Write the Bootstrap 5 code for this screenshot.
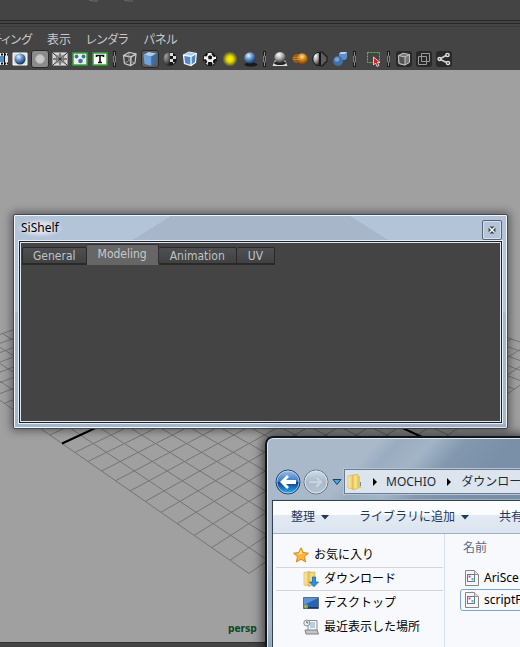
<!DOCTYPE html>
<html lang="ja">
<head>
<meta charset="utf-8">
<meta name="viewport" content="width=device-width, initial-scale=1">
<title>SiShelf</title>
<link href="https://cdn.jsdelivr.net/npm/bootstrap@5.3.0/dist/css/bootstrap.min.css" rel="stylesheet">
<style>
body { font: 12px/18px "Noto Sans", "Noto Sans CJK JP", sans-serif; background: #a0a0a0; color: #000; }
button { font: inherit; }
svg { display: block; flex: none; }
.head { background: #444; }
.head-strip { height: 20px; color: #666; }
.head-rule { height: 4px; border-top: 1px solid #282828; border-bottom: 1px solid #282828; }
.head-edge { height: 3px; border-bottom: 1px solid #3a3a3a; }
.menus { gap: 15px; margin-left: -9px; height: 23px; padding-top: 3px; font-feature-settings: "palt"; }
.menus a { color: #c8c8c8; text-decoration: none; white-space: nowrap; }
.tools { height: 20px; padding-bottom: 2px; margin-left: -10px; }
.tool { width: 20px; height: 18px; padding: 0 1px; border: 1px solid transparent; background: none; border-radius: 3px; flex: none; display: flex; align-items: center; justify-content: center; }
.tool.on { width: 18px; margin: 0 1px; padding: 0; border-color: #292929; background: #5c5c5c; }
.tool.lit { background: #8b8b8b; }
.tool.dark { width: 16px; height: 16px; margin: 0 2px; padding: 0; background: #292929; }
.tool-sep { width: 10px; flex: none; }
.scene { background: #a0a0a0; }
.foot { height: 5px; background: #444; border-top: 1px solid #303030; }
.scene-name { color: #0b4a24; font: bold 10px/12px "DejaVu Sans Condensed", "DejaVu Sans", sans-serif; padding: 0 0 7px 228px; }
.grid-art { left: 0; top: 0; }

.shelf { left: 13px; right: 12px; top: 214px; height: 215px; padding: 0 4px 4px; border: 1px solid #3f4a57; border-radius: 2px;
  box-shadow: inset 0 0 0 1px #f1f6fb, 0 0 8px 2px rgba(0,0,0,.42);
  background: linear-gradient(148deg, #b4c4d8 0 84px, transparent 84px) , linear-gradient(212deg, #b4c4d8 0 84px, #a7b7c9 84px); }
.shelf-title { height: 26px; padding: 0 1px 0 0; }
.shelf-title span { background: radial-gradient(ellipse, #d8e0eb 40%, transparent 72%); padding: 0 4px; margin-left: -1px; }
.shut { width: 20px; height: 20px; padding: 0; border: 1px solid #566477; border-radius: 2px; background: #b4c4d8; box-shadow: inset 0 0 0 1px #d5e0ee; margin-top: 3px; display: flex; align-items: center; justify-content: center; }
.shelf-body { background: #444; border: 1px solid #202124; outline: 1px solid #e5edf6; box-shadow: inset 0 0 0 1px #dfe6ee; padding: 2px; margin: 0 1px 1px; }
.tabs { align-items: flex-end; font-family: "DejaVu Sans Condensed", "Noto Sans", sans-serif; }
.tabs button { height: 18px; padding: 0 11px; border: 1px solid #292929; border-left-width: 0; border-bottom-width: 2px; background: linear-gradient(#4d5052, #414141); color: #bfc3c7; line-height: 16px; border-radius: 2px 2px 0 0; }
.tabs button:first-child { border-left-width: 1px; padding: 0 10px; }
.tabs button.active { height: 21px; background: #666; border-color: #303030; border-bottom-color: #666; line-height: 18px; color: #c8c8c8; }

.files { left: 265px; right: -8px; top: 436px; bottom: -8px; border: 2px solid #10161d; border-radius: 8px; padding: 0 5px; box-shadow: inset 0 0 0 1px #dce8f3, 0 0 11px 2px rgba(0,0,0,.65);
  background: linear-gradient(132deg, #a9b9ca 0 85px, #9aacc0 100px, #a3b4c6 125px, #8398af 150px, #7990a8 185px, #758da6 100%); }
.addr-row { height: 62px; padding: 31px 0 6px 3px; }
.round { width: 26px; height: 26px; padding: 0; border: 0; background: none; margin-right: 2px; flex: none; }
.drop { padding: 0; border: 0; background: none; margin: 0 2px 0 1px; }
.address { height: 25px; background: #dce4ee; border: 1px solid #6a7c91; box-shadow: 0 0 0 1px #b5c4d4; padding-left: 2px; white-space: nowrap; overflow: hidden; }
.address a { color: #1d2a38; text-decoration: none; line-height: 20px; }
.client { background: #f7f9fc; border: 1px solid #34404e; border-bottom: 0; box-shadow: 0 0 0 1px #9fb1c4; }
.commands { height: 33px; border-bottom: 1px solid #9eb0c5; padding-left: 18px; gap: 30px; background: linear-gradient(#fafcfe 0 14px, #e3eaf3 14px, #dbe4ef); white-space: nowrap; }
.commands button { background: none; border: 0; padding: 0; color: #1e395b; display: flex; align-items: center; gap: 6px; }
.places { width: 172px; border-right: 1px solid #d3dfec; padding: 9px 1px 0 3px; flex: none; }
.places a, .listing a { color: #000; text-decoration: none; display: flex; align-items: center; white-space: nowrap; }
.places a { height: 24px; padding-left: 27px; gap: 5px; }
.places a.top { padding-left: 17px; }
.places a.here { border: solid #d2d6dc; border-width: 1px 0; }
.listing { padding: 5px 0 0 15px; }
.listing .caption2 { color: #5b6b7f; padding: 0 0 10px 3px; }
.listing a { height: 22px; padding-left: 4px; gap: 5px; border: 1px solid transparent; border-radius: 3px; }
.listing a.picked { border-color: #7da2ce; }
</style>
<script src="https://cdn.jsdelivr.net/npm/bootstrap@5.3.0/dist/js/bootstrap.bundle.min.js" defer></script>
</head>
<body>
<svg width="0" height="0" class="position-absolute" aria-hidden="true">
  <defs>
    <radialGradient id="gBlue" cx=".38" cy=".3" r=".7"><stop offset="0" stop-color="#e8f4ff"/><stop offset=".45" stop-color="#6795c8"/><stop offset="1" stop-color="#123460"/></radialGradient>
    <radialGradient id="gGrey" cx=".4" cy=".25" r=".75"><stop offset="0" stop-color="#fff"/><stop offset=".5" stop-color="#aaa"/><stop offset="1" stop-color="#333"/></radialGradient>
    <radialGradient id="gGold" cx=".5" cy=".3" r=".7"><stop offset="0" stop-color="#ffe2a0"/><stop offset=".4" stop-color="#d58a26"/><stop offset="1" stop-color="#6d3603"/></radialGradient>
    <radialGradient id="gSun"><stop offset="0" stop-color="#fff600"/><stop offset=".4" stop-color="#e0d800"/><stop offset=".95" stop-color="#e0d800" stop-opacity="0"/></radialGradient>
    <linearGradient id="gNav" x2="0" y2="1"><stop offset="0" stop-color="#9cc3ea"/><stop offset=".48" stop-color="#3a78c4"/><stop offset=".52" stop-color="#0a3f94"/><stop offset="1" stop-color="#2fb4f2"/></linearGradient>
    <linearGradient id="gOff" x2="0" y2="1"><stop offset="0" stop-color="#d3dde8"/><stop offset=".5" stop-color="#aabac9"/><stop offset="1" stop-color="#b6c4d2"/></linearGradient>
    <linearGradient id="gFold" x2="1"><stop offset="0" stop-color="#fbeeb0"/><stop offset="1" stop-color="#e5be50"/></linearGradient>
    <symbol id="sep" viewBox="0 0 10 18"><path d="M4.500 1v16" stroke="#1b1b1b" stroke-width="3"/><path d="M4.500 2v4M4.500 12v4" stroke="#8c8c8c"/><path d="M3.500 6h2v6h-2z" fill="#333" stroke="#7c7c7c"/></symbol>
    <symbol id="doc" viewBox="0 0 14 16"><path d="M.5.5h9l4 4v11H.5z" fill="#f4f5f6" stroke="#858585"/><path d="M9.500.5v4h4" fill="#ddd" stroke="#999"/><rect x="2.500" y="4.500" width="7" height="7" fill="#fff" stroke="#777"/><path d="M3.500 5.500h2v2h-2z" fill="#e332c8"/><path d="M6.500 8h2v2.500h-2z" fill="#28c8e0"/></symbol>
  </defs>
</svg>

<div class="vh-100 d-flex flex-column position-relative overflow-hidden">
  <header class="head">
    <div class="head-strip"><svg width="150" height="3"><path d="M89 0l4 1h5M124 0l4 1h5" stroke="#6a6a6a" fill="none"/></svg></div>
    <div class="head-rule"></div><div class="head-edge"></div>
    <nav class="menus d-flex align-items-center"><a href="#">ティング</a><a href="#">表示</a><a href="#">レンダラ</a><a href="#">パネル</a></nav>
    <div class="tools d-flex align-items-center">
      <button class="tool" aria-label="Film gate"><svg width="16" height="14"><path d="M0 1h16v12H0z" fill="#e4e4e4"/><path d="M2 4h11v6H2z" fill="#4a90c8"/><path d="M0 2.500h16M0 11.500h16" stroke="#111" stroke-width="2" stroke-dasharray="2 1"/><path d="M12.500 1v12" stroke="#111"/></svg></button>
      <button class="tool" aria-label="Camera"><svg width="16" height="14"><path d="M1 1h14v12H1z" fill="#d8dde2" stroke="#fff"/><circle cx="8" cy="7" r="5.500" fill="url(#gBlue)"/></svg></button>
      <button class="tool on lit" aria-label="Gate mask"><svg width="16" height="16"><circle cx="8" cy="8" r="4.500" fill="#c8c8c8" stroke="#aaa"/></svg></button>
      <button class="tool" aria-label="Field chart"><svg width="16" height="14"><path d="M1 1h14v12H1z" fill="#c9c9c9" stroke="#eee"/><path d="M1 1l14 12M15 1L1 13M8 1v12M1 7h14" stroke="#333"/><path d="M4.500 4h7v6h-7z" fill="none" stroke="#777"/></svg></button>
      <button class="tool" aria-label="Safe action"><svg width="16" height="14"><path d="M1 1h14v12H1z" fill="#e8f0ea" stroke="#34a634" stroke-width="1.500"/><circle cx="4.500" cy="4.500" r="1.900" fill="#3f709f"/><circle cx="11.500" cy="4.500" r="1.900" fill="#3f709f"/><circle cx="8.500" cy="9" r="2.300" fill="#3f709f"/></svg></button>
      <button class="tool" aria-label="Safe title"><svg width="16" height="14"><path d="M1 1h14v12H1z" fill="#fff" stroke="#34a634" stroke-width="1.500"/><path d="M4.500 5V3.500h7V5M8 3.500v7M6 10.500h4" stroke="#111" stroke-width="1.600" fill="none"/></svg></button>
      <svg class="tool-sep" height="18"><use href="#sep"/></svg>
      <button class="tool" aria-label="Wireframe"><svg width="16" height="16"><g fill="none" stroke="#c9c9c9" stroke-width="1.200"><path d="M1.500 4.500L7 1.500l7 1.500-1 9-4.500 2.500-6-2z"/><path d="M1.500 4.500l7.500 1.500 5-3M9 6l-.5 8.500" stroke-width="1.500"/><path d="M7 1.500V9.500l-4.500 3M7 9.500l6 2.500" stroke="#999" stroke-width="1"/></g></svg></button>
      <button class="tool on" aria-label="Shaded"><svg width="16" height="16"><path d="M1.500 4l5-3 8 1.500L9.500 5.500z" fill="#a9cdf0"/><path d="M1.500 4l8 1.500V15l-7-2z" fill="#6ea2d8"/><path d="M9.500 5.500l5-3L14 12l-4.500 3z" fill="#3d6da6"/></svg></button>
      <button class="tool" aria-label="Default material"><svg width="16" height="16"><circle cx="8" cy="8" r="6.800" fill="#161616"/><path d="M8 1.200a6.800 6.800 0 000 13.600z" fill="url(#gGrey)" opacity=".6"/><path d="M8 2h3v3H8zM11 5h3v3h-3zM8 8h3v3H8zM11 11h2l-2 2z" fill="#ddd"/></svg></button>
      <button class="tool" aria-label="Wireframe on shaded"><svg width="16" height="16"><path d="M1.500 4l5.500-2.800 7.300 1.300-.8 9L9 14.500 2.500 12.500z" fill="#5488c4" stroke="#f2f7fc" stroke-width="1.300"/><path d="M1.500 4l5.500-2.800 7.300 1.300L9 5.500z" fill="#a9cdf0"/><path d="M1.500 4L9 5.500l5.300-3M9 5.500v9" fill="none" stroke="#f2f7fc" stroke-width="1.300"/></svg></button>
      <button class="tool" aria-label="Textured"><svg width="16" height="16"><circle cx="8" cy="8" r="6.800" fill="#f2f2f2" stroke="#111" stroke-width="1"/><path d="M6 5.500l2-1.200 2.200 1.200-.6 2.800H6.600zM1.800 5L4.500 2l1.700.8L4.500 5.500zM9.800 1.800l3.200 2 .8 2-2 .2-2.200-2.400zM1.200 8.500l2.600-.3L5.300 10.500 4 13zM11 9.500l1.800-1.500h2L13 12.500l-1.800-.2zM6.300 11h3.500l1 2.600-2.600 1.200-2.700-1.200z" fill="#111"/></svg></button>
      <button class="tool" aria-label="Lights"><svg width="16" height="16"><circle cx="8" cy="8" r="8" fill="url(#gSun)"/></svg></button>
      <button class="tool" aria-label="Shadows"><svg width="16" height="16"><ellipse cx="9" cy="13.500" rx="6.500" ry="2" fill="#191919"/><circle cx="8" cy="7" r="5.800" fill="url(#gBlue)"/></svg></button>
      <svg class="tool-sep" height="18"><use href="#sep"/></svg>
      <button class="tool" aria-label="Occlusion"><svg width="16" height="16"><path d="M3 9h10l2.500 6H.5z" fill="#ddd"/><ellipse cx="8" cy="12" rx="6" ry="2" fill="#222"/><circle cx="8" cy="6.500" r="5.500" fill="url(#gGrey)"/></svg></button>
      <button class="tool" aria-label="Motion blur"><svg width="16" height="16"><circle cx="5" cy="7.500" r="4.500" fill="#9a5c14"/><circle cx="10" cy="8" r="5.700" fill="url(#gGold)"/><path d="M1 6.500h7M1 8.500h7" stroke="#edb45c" stroke-opacity=".4"/></svg></button>
      <button class="tool" aria-label="Anti-aliasing"><svg width="16" height="16"><path d="M8.500 1H11v2h2v2h2v6h-2v2h-2v2H8.500z" fill="#5e5e5e" stroke="#161616"/><path d="M7.500 1.200a6.800 6.800 0 000 13.600z" fill="url(#gGrey)" stroke="#161616"/></svg></button>
      <button class="tool" aria-label="Depth of field"><svg width="16" height="16"><path d="M7 3l2-2h6v6l-2 2H7z" fill="#5c8fc7"/><path d="M7 3l2-2h6l-2 2z" fill="#b3d3f2"/><circle cx="6" cy="10" r="5" fill="#416fa8"/><circle cx="5" cy="8.500" r="2.300" fill="#77a3d3"/></svg></button>
      <svg class="tool-sep" height="18"><use href="#sep"/></svg>
      <button class="tool ms-1" aria-label="Isolate select"><svg width="16" height="16"><path d="M1.500 1.500h12v10h-12z" fill="none" stroke="#49cb49" stroke-dasharray="2 1"/><path d="M7.500 6v8l2-2 1.500 3.500 2-1-1.500-3H14z" fill="#d22222" stroke="#f5e8e8" stroke-width=".8"/></svg></button>
      <svg class="tool-sep" height="18"><use href="#sep"/></svg>
      <button class="tool dark" aria-label="X-ray"><svg width="14" height="14"><path d="M1.500 3.500L6 1.200l6.500 1.300v8L8 13 2 11.500z" fill="#777" stroke="#c4c4c4"/><path d="M1.500 3.500L8 5v8L2 11.500z" fill="#555" stroke="#c4c4c4"/><path d="M8 5l4.500-2.500" stroke="#c4c4c4"/></svg></button>
      <button class="tool dark" aria-label="X-ray active"><svg width="14" height="14"><path d="M4.500 1.500h8v8h-8zM1.500 4.500h8v8h-8z" fill="none" stroke="#999"/></svg></button>
      <button class="tool dark" aria-label="X-ray joints"><svg width="14" height="14"><path d="M2.500 7L10 3M2.500 7l8 4" stroke="#ccc" stroke-width="1.800"/><g fill="#444" stroke="#ddd" stroke-width="1.400"><circle cx="2.500" cy="7" r="1.500"/><circle cx="10.500" cy="3" r="1.600"/><circle cx="11" cy="11" r="1.600"/></g></svg></button>
    </div>
  </header>
  <main class="scene flex-grow-1 d-flex flex-column justify-content-end">
    <svg class="grid-art position-absolute" width="520" height="640" aria-hidden="true"><path id="gridLines" fill="none" stroke="#757575"/><path id="axisLines" fill="none" stroke="#000" stroke-width="2"/></svg>
    <div class="scene-name position-relative">persp</div>
  </main>
  <footer class="foot"></footer>

  <section class="shelf position-absolute d-flex flex-column">
    <div class="shelf-title d-flex justify-content-between align-items-center"><span>SiShelf</span>
      <button class="shut" aria-label="Close"><svg width="8" height="8"><path d="M1.500 1.500l5 5M6.500 1.500l-5 5" stroke="#343d49" stroke-width="4"/><path d="M1.500 1.500l5 5M6.500 1.500l-5 5" stroke="#fff" stroke-width="1.500"/></svg></button></div>
    <div class="shelf-body flex-grow-1">
      <div class="tabs d-flex" role="tablist"><button role="tab">General</button><button role="tab" class="active" aria-selected="true">Modeling</button><button role="tab">Animation</button><button role="tab">UV</button></div>
    </div>
  </section>

  <section class="files position-absolute d-flex flex-column">
    <div class="addr-row d-flex align-items-center">
      <button class="round" aria-label="Back"><svg width="26" height="26"><circle cx="13" cy="13" r="12" fill="url(#gNav)" stroke="#2b405f"/><circle cx="13" cy="13" r="11" fill="none" stroke="#c5dbf0" stroke-opacity=".7"/><path d="M5 13l7-7 2 2-3 3h10v4H11l3 3-2 2z" fill="#fff"/></svg></button>
      <button class="round" aria-label="Forward"><svg width="26" height="26"><circle cx="13" cy="13" r="12" fill="url(#gOff)" stroke="#64758a"/><circle cx="13" cy="13" r="11" fill="none" stroke="#dbe4ed"/><path d="M20 13l-6-6-2 2 2.500 2.500H6v3h8.500L12 17l2 2z" fill="#c8d3df" stroke="#b0bfce"/></svg></button>
      <button class="drop" aria-label="Recent pages"><svg width="10" height="8"><path d="M1 1.500h8L5 6.500z" fill="#4ba5dc" stroke="#1b3f6c"/></svg></button>
      <div class="address flex-grow-1 d-flex align-items-center">
        <svg width="16" height="18"><path d="M1 3l6-1v14l-6-1z" fill="url(#gFold)" stroke="#d8b04a" stroke-width=".6"/><path d="M6 2l5-.5V15l-5 2z" fill="#f5dd82" stroke="#cba23c" stroke-width=".6"/><path d="M11 3h2v7l1 1v4l-3 .5z" fill="#e6c35c"/><path d="M13.500 9v4" stroke="#5594c8"/></svg>
        <svg class="ms-2 me-2" width="7" height="10"><path d="M2 1v8l4-4z" fill="#000"/></svg>
        <a href="#">MOCHIO</a>
        <svg class="ms-2 me-2" width="9" height="10"><path d="M3 1v8l4-4z" fill="#000"/></svg>
        <a href="#">ダウンロー</a>
      </div>
    </div>
    <div class="client flex-grow-1 d-flex flex-column">
      <div class="commands d-flex align-items-center">
        <button>整理<svg width="8" height="5"><path d="M0 0h8L4 4.500z" fill="#1e395b"/></svg></button>
        <button>ライブラリに追加<svg width="8" height="5"><path d="M0 0h8L4 4.500z" fill="#1e395b"/></svg></button>
        <button>共有</button>
      </div>
      <div class="d-flex flex-grow-1">
        <nav class="places">
          <a href="#" class="top"><svg width="16" height="16"><path d="M8 .8l2.200 4.800 5.200.6-3.900 3.500 1.100 5.200L8 12.300l-4.600 2.600 1.100-5.200L.6 6.200l5.200-.6z" fill="#fbb53a" stroke="#df8416"/><path d="M8 3l1.300 3.600L5 8z" fill="#ffe7a0"/></svg>お気に入り</a>
          <a href="#" class="here"><svg width="16" height="16"><path d="M1 1.500l6-1V15l-6-1z" fill="url(#gFold)" stroke="#cfa94a" stroke-width=".6"/><path d="M6 1.500l6-.5v12l-6 2.500z" fill="#f2d77e" stroke="#cba23c" stroke-width=".6"/><path d="M9.500 6h3v5h3L11 15.800 6.500 11h3z" fill="#2796e0" stroke="#0d5fa5" stroke-width=".7"/></svg>ダウンロード</a>
          <a href="#"><svg width="16" height="16"><path d="M.5 2.500h15v11H.5z" fill="#2a62b5" stroke="#5d6e82"/><path d="M1 3h14L1 10z" fill="#5c93da"/><path d="M1 12h14v1.500H1z" fill="#193963"/><circle cx="3" cy="11.500" r="2" fill="#e8a03c"/><path d="M3 9.500a2 2 0 010 4z" fill="#5bb650"/></svg>デスクトップ</a>
          <a href="#"><svg width="16" height="16"><path d="M5 1.500h9v11H5z" fill="#f4f5f6" stroke="#8a8f94"/><path d="M7 4h5M7 6h5M7 8h5" stroke="#79a9ce"/><path d="M2 11h12l1.500 4H3z" fill="#c3c6c9" stroke="#7d8286"/><circle cx="3.800" cy="4" r="3" fill="#eceef0" stroke="#8a8f94"/><path d="M3.800 2v2h1.500" fill="none" stroke="#666"/></svg>最近表示した場所</a>
        </nav>
        <div class="listing flex-grow-1">
          <div class="caption2">名前</div>
          <a href="#"><svg width="14" height="16"><use href="#doc"/></svg>AriSce</a>
          <a href="#" class="picked"><svg width="14" height="16"><use href="#doc"/></svg>scriptF</a>
        </div>
      </div>
    </div>
  </section>
</div>
<script>
// Ground plane in perspective: u and v run from -1 to 1, 24 cells a side.
const spot = (u, v) => {
  const depth = 6.05 - u - v;
  return (249 + 944 * (u - v) / depth).toFixed(1) + ' ' + (2659 / depth - 83).toFixed(1);
};
const cross = t => `M${spot(t, -1)}L${spot(t, 1)}M${spot(-1, t)}L${spot(1, t)}`;
let lines = '';
for (let i = -12; i <= 12; i++) lines += cross(i / 12);
document.getElementById('gridLines').setAttribute('d', lines);
document.getElementById('axisLines').setAttribute('d', cross(0));
</script>
</body>
</html>
